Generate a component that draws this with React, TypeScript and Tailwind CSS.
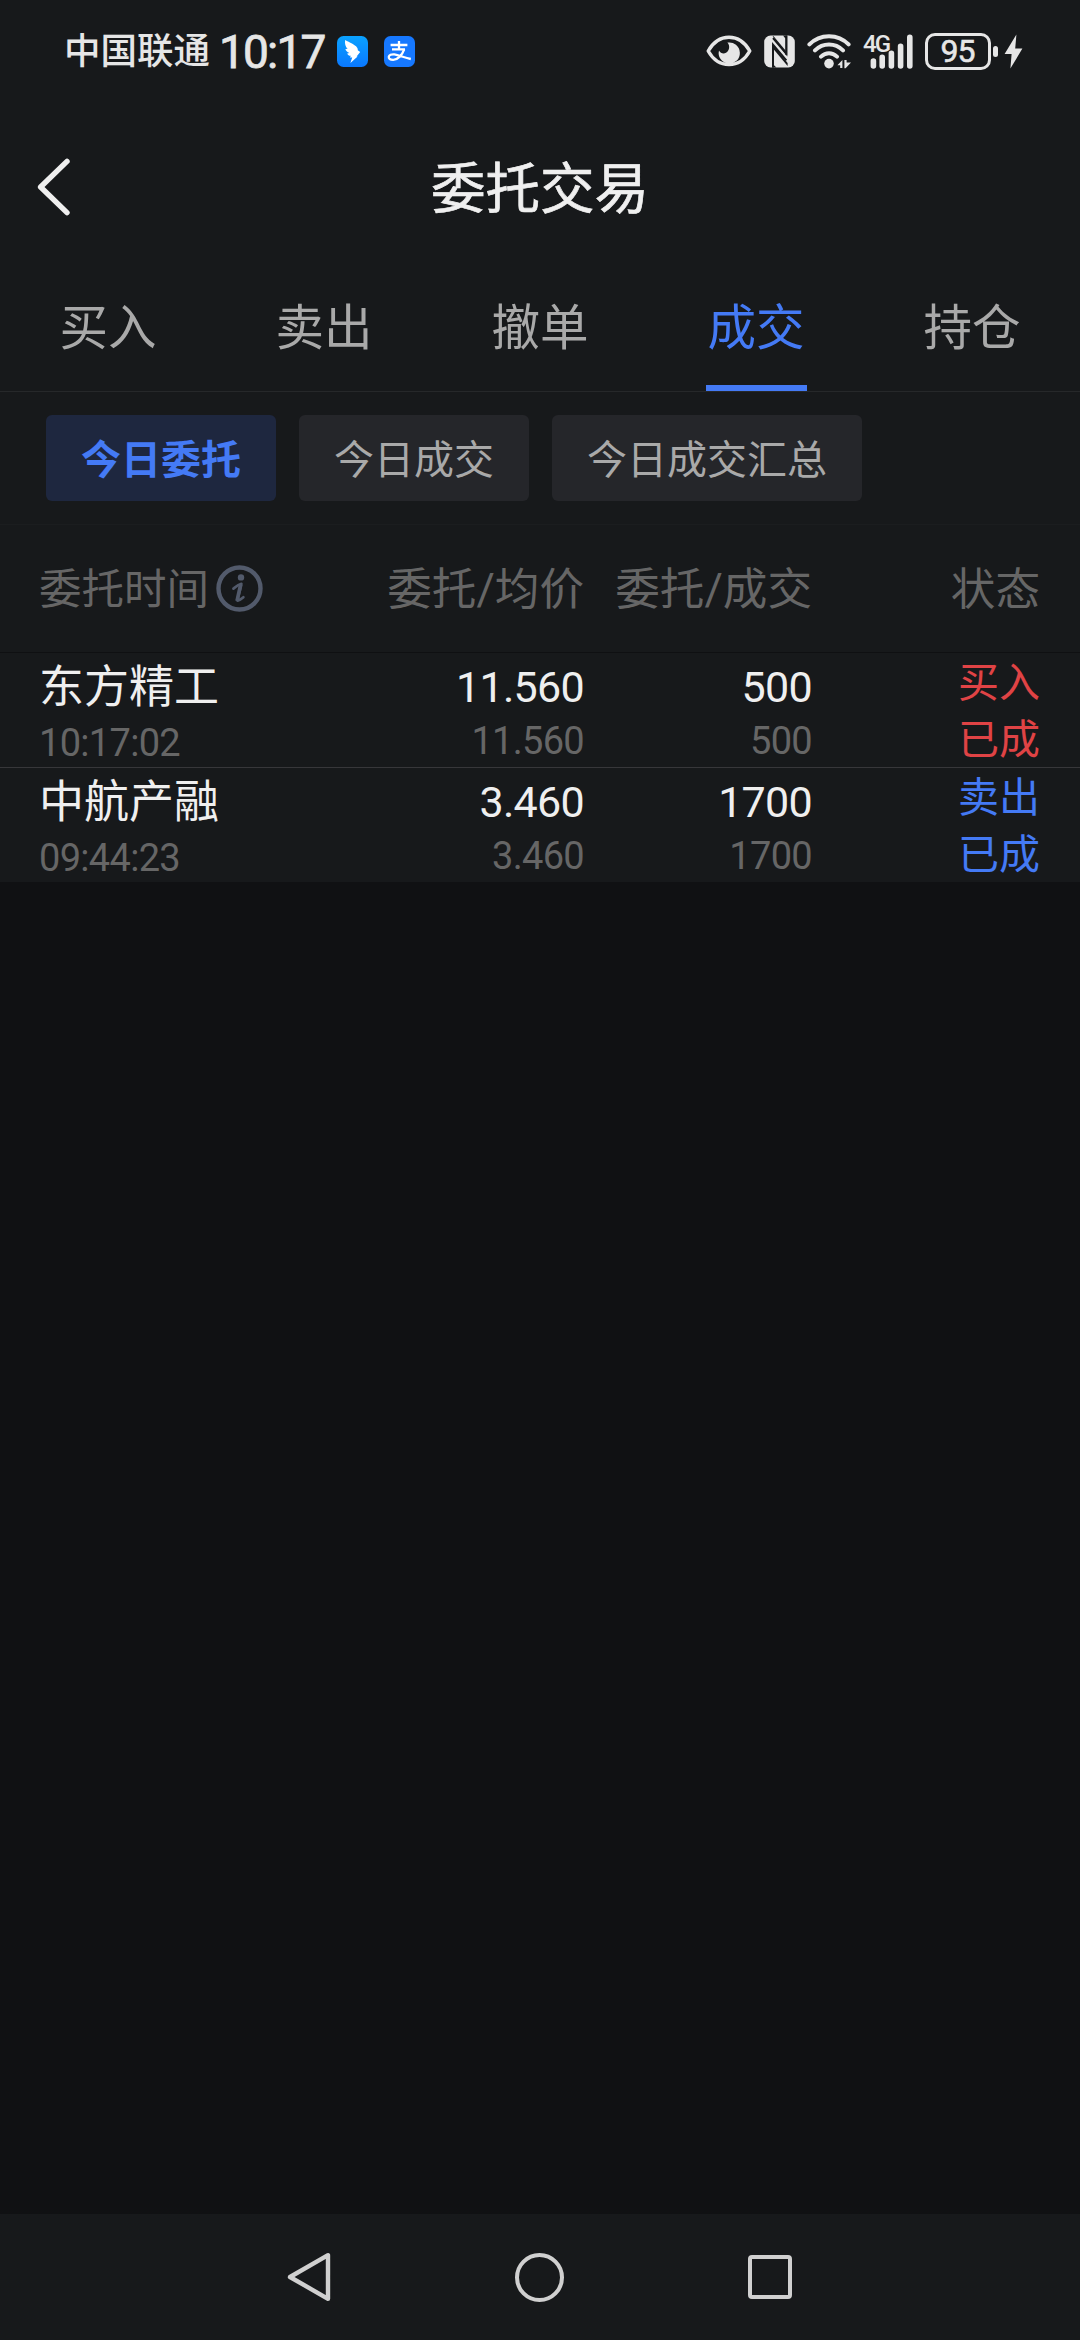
const tabs = ['买入', '卖出', '撤单', '成交', '持仓'];

const filters = ['今日委托', '今日成交', '今日成交汇总'];

const orders = [
  {
    name: '东方精工',
    time: '10:17:02',
    price: '11.560',
    avgPrice: '11.560',
    amount: '500',
    dealt: '500',
    side: '买入',
    status: '已成',
    cls: 'text-[#e04345]',
  },
  {
    name: '中航产融',
    time: '09:44:23',
    price: '3.460',
    avgPrice: '3.460',
    amount: '1700',
    dealt: '1700',
    side: '卖出',
    status: '已成',
    cls: 'text-[#447af5]',
  },
];

function StatusBar() {
  return (
    <div className="flex h-[102px] items-center pl-[64px] pr-[57px] text-[#e6e6e6]">
      <span className="pt-[2px] text-[36.5px] font-medium leading-none">中国联通</span>
      <span className="ml-[9px] w-[107px] whitespace-nowrap pt-[2px] text-[46px] leading-none tracking-[-1.8px] [-webkit-text-stroke:0.8px_currentColor]">
        10:17
      </span>

      {/* notification icons */}
      <svg className="ml-[11px] h-[31px] w-[31px]" viewBox="0 0 31 31">
        <defs>
          <linearGradient id="wing" x1="0" y1="0" x2="0" y2="1">
            <stop offset="0" stopColor="#0aa2ff" />
            <stop offset="1" stopColor="#0a78ff" />
          </linearGradient>
        </defs>
        <rect width="31" height="31" rx="6.5" fill="url(#wing)" />
        <path
          d="M8.2 4C12.6 6.4 18 8.6 20 11.4C20.8 12.6 20.8 13.4 20.8 14.2L23.2 16L19.6 20.6H20.6L13.4 27L15.2 21.6H13L13.8 19.8C12 19.8 10.8 18.8 10.2 17.4L12.4 17C10.2 16.2 8.8 14.8 8.4 13L10.6 12.8C8.6 11 7.4 7.4 8.2 4Z"
          fill="#fff"
        />
      </svg>
      <svg className="ml-[16px] h-[31px] w-[31px]" viewBox="0 0 31 31" fill="none">
        <rect width="31" height="31" rx="6.5" fill="#1678ff" />
        <path d="M6.6 9H23.4M15 5V13.4M8 13.4H21" stroke="#fff" strokeWidth="2.3" />
        <path
          d="M20.2 13.4C18.2 18.8 14 23.8 9.2 23.8C6 23.8 4.6 22.6 4.8 21C5 19 7.4 18 10.4 18.4C15 19 20.4 21.8 26.8 23"
          stroke="#fff"
          strokeWidth="2.3"
        />
      </svg>

      <div className="ml-auto flex items-center">
        <svg className="h-[32px] w-[46px]" viewBox="0 0 46 32" fill="none">
          <path
            d="M2.2 16C7 7.4 14.4 2.2 23 2.2S39 7.4 43.8 16C39 24.6 31.6 29.6 23 29.6S7 24.6 2.2 16Z"
            stroke="currentColor"
            strokeWidth="3.4"
            strokeLinejoin="round"
          />
          <path
            d="M21.4 7.6A10.6 10.6 0 1 1 13 15.4C14.4 18.2 17.4 19.2 20 17.8C23.4 16 24.4 11 21.4 7.6Z"
            fill="currentColor"
          />
        </svg>
        <svg className="ml-[12px] h-[33px] w-[31px]" viewBox="0 0 31 33" fill="none">
          <rect x="0.2" y="0.6" width="30.6" height="31.8" rx="6.4" fill="currentColor" />
          <path
            d="M9 32.4V9.6L22.4 25.4M9 3.2L22.4 19V0.6"
            stroke="#17191b"
            strokeWidth="1.9"
          />
          <path d="M8.6 1.2L22.4 20.2L22.4 16.6L9.6 1.2Z" fill="#17191b" />
          <path d="M9 10L23.6 28V31L9 13.4Z" fill="#17191b" />
          <path d="M8 32.4V10H9.8V30L12.4 32.4ZM23.2 0.6V20H21.4V3.6L19 0.6Z" fill="#17191b" />
        </svg>
        <svg className="ml-[12px] h-[35px] w-[45px]" viewBox="0 0 45 35" fill="none">
          <path
            d="M2.4 10.4C13 -0.6 31 -0.6 41.6 10.4M8 16.4C16 8.6 28 8.6 36 16.4M14 22.6C18.8 18.2 25.2 18.2 30 22.6"
            stroke="currentColor"
            strokeWidth="4"
            strokeLinecap="round"
          />
          <circle cx="22" cy="29.6" r="4.8" fill="currentColor" />
          <path d="M30.4 31.2L35.4 26V34H33.2V31.2ZM37.4 26H39.6V28.6H44L38.6 34.2H37.4Z" fill="currentColor" />
        </svg>
        <div className="relative ml-[11px] h-[35px] w-[51px]">
          <span className="absolute left-0 top-0 text-[24px] font-medium leading-[20px] tracking-[-2px]">4G</span>
          <svg className="h-[35px] w-[51px]" viewBox="0 0 51 35" fill="none">
            <path
              d="M10.4 27V32M19.2 23.4V32M28.4 19.4V32M37.6 12.4V32M46.8 3.4V32"
              stroke="currentColor"
              strokeWidth="5.6"
              strokeLinecap="round"
            />
          </svg>
        </div>
        <div className="ml-[11px] flex h-[37px] w-[66px] items-center justify-center rounded-[10px] border-[3px] border-current pr-[1px] text-[32px] leading-none tracking-[-1px] [-webkit-text-stroke:0.6px_currentColor]">
          95
        </div>
        <div className="ml-[2px] h-[11px] w-[5px] rounded-full bg-current" />
        <svg className="ml-[6px] h-[35px] w-[19px]" viewBox="0 0 19 35">
          <path d="M12.4 0.4L0.6 20H7.6L6.4 34.6L18.4 14.6H11.2Z" fill="currentColor" />
        </svg>
      </div>
    </div>
  );
}

export default function App() {
  return (
    <div className="flex h-[2340px] w-[1080px] flex-col overflow-hidden bg-[#101113] font-[Roboto,'Noto_Sans_CJK_SC',sans-serif]">
      <div className="bg-[#17191b]">
        <StatusBar />

        <header className="grid h-[170px] grid-cols-3 items-center text-[#efefef]">
          <svg className="ml-[37px] h-[58px] w-[34px]" viewBox="0 0 34 58" fill="none">
            <path
              d="M30 3.4L3.6 29L30 54.6"
              stroke="currentColor"
              strokeWidth="5.4"
              strokeLinecap="round"
              strokeLinejoin="round"
            />
          </svg>
          <h1 className="pt-[5px] text-center text-[54.5px] leading-none [-webkit-text-stroke:0.7px_currentColor]">
            委托交易
          </h1>
        </header>

        {/* Tabs */}
        <nav className="grid grid-cols-5 border-b border-[#26282a]">
          {tabs.map((tab) => (
            <div key={tab} className="flex flex-col items-center">
              <span
                className={`h-[113px] text-[48.5px] leading-[114px] ${
                  tab === '成交' ? 'text-[#447af5]' : 'text-[#a9a9a9]'
                }`}
              >
                {tab}
              </span>
              <span className={`h-[6px] w-[101px] ${tab === '成交' ? 'bg-[#447af5]' : ''}`} />
            </div>
          ))}
        </nav>

        {/* Filters */}
        <div className="flex gap-[23px] border-b border-[#1b1d1f] px-[46px] py-[23px]">
          {filters.map((f, i) => (
            <div
              key={f}
              className={`h-[86px] rounded-md px-[35px] text-[40px] leading-[91px] ${
                i === 0 ? 'bg-[#1e273f] font-bold text-[#447af5]' : 'bg-[#25262a] text-[#a9a9a9]'
              }`}
            >
              {f}
            </div>
          ))}
        </div>

        {/* Table head */}
        <div className="grid h-[128px] grid-cols-[322px_223px_228px_228px] items-center border-b border-[#0f1012] pl-[39px] text-right text-[44.6px] leading-none text-[#666]">
          <div className="flex items-center text-[42.5px]">
            <span className="pt-[3px]">委托时间</span>
            <svg className="ml-[7px] h-[47px] w-[47px]" viewBox="0 0 47 47" fill="none">
              <circle cx="23.5" cy="23.5" r="21" stroke="#525a6b" strokeWidth="4.4" />
              <circle cx="25" cy="12.4" r="3.2" fill="#525a6b" />
              <path
                d="M17.4 23.6C20 21.6 22 19.8 25.4 18.8C24.8 24 22.4 30 21.4 35.6C23.6 35.4 25.4 34 27.4 32.2"
                stroke="#525a6b"
                strokeWidth="2.6"
                strokeLinecap="round"
                strokeLinejoin="round"
              />
              <path d="M24.6 19.6L21 36" stroke="#525a6b" strokeWidth="3.6" />
            </svg>
          </div>
          <div className="pt-[3px]">委托/均价</div>
          <div className="pt-[3px]">委托/成交</div>
          <div className="pt-[3px]">状态</div>
        </div>

        {/* Orders */}
        <div className="divide-y divide-[#37373a]">
          {orders.map((o) => (
            <div
              key={o.name}
              className="box-content grid h-[114px] grid-cols-[322px_223px_228px_228px] pl-[39px] text-right text-[#efefef]"
            >
              <div className="text-left">
                <div className="h-[62px] text-[45px] leading-[70px]">{o.name}</div>
                <div className="text-[38px] leading-[57px] tracking-[-0.7px] text-[#666]">{o.time}</div>
              </div>
              <div>
                <div className="h-[62px] text-[43px] leading-[68px] tracking-[-0.7px]">{o.price}</div>
                <div className="text-[38px] leading-[53px] tracking-[-0.7px] text-[#666]">{o.avgPrice}</div>
              </div>
              <div>
                <div className="h-[62px] text-[43px] leading-[68px] tracking-[-0.7px]">{o.amount}</div>
                <div className="text-[38px] leading-[53px] tracking-[-0.7px] text-[#666]">{o.dealt}</div>
              </div>
              <div className={`pt-[2px] text-[41px] leading-[57px] ${o.cls}`}>
                <div>{o.side}</div>
                <div>{o.status}</div>
              </div>
            </div>
          ))}
        </div>
      </div>

      {/* System navigation */}
      <div className="mt-auto flex h-[126px] items-center justify-between bg-[#17191b] pl-[287px] pr-[288px] text-[#d0d0d0]">
        <svg className="h-[50px] w-[44px]" viewBox="0 0 44 50" fill="none">
          <path
            d="M41 3.2V46.8L3 25Z"
            stroke="currentColor"
            strokeWidth="4.4"
            strokeLinejoin="round"
          />
        </svg>
        <div className="h-[49px] w-[49px] rounded-full border-[4px] border-current" />
        <div className="h-[44px] w-[44px] rounded-[4px] border-[4px] border-current" />
      </div>
    </div>
  );
}
